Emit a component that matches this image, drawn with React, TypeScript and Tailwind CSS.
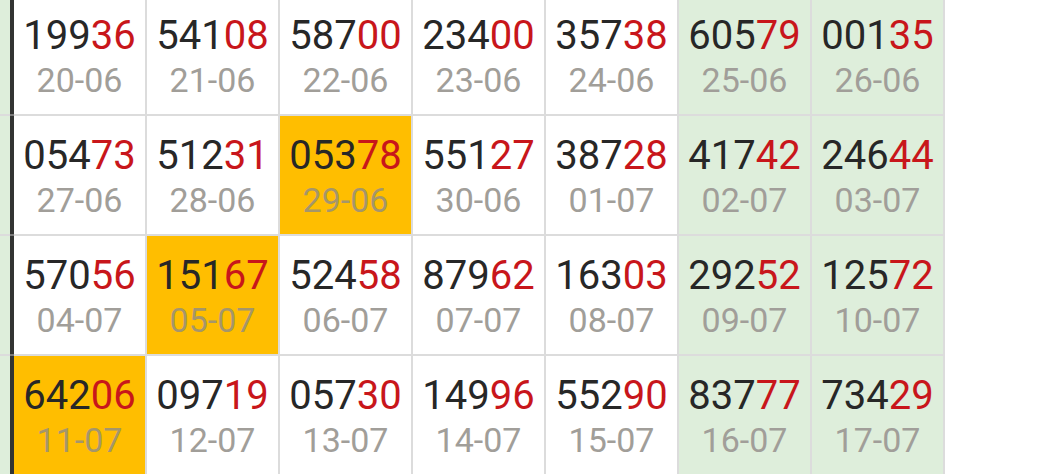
type Cell = { num: string; date: string; hl?: boolean };

// rows of results, last two columns are weekend (green)
const rows: Cell[][] = [
  [
    { num: '19936', date: '20-06' },
    { num: '54108', date: '21-06' },
    { num: '58700', date: '22-06' },
    { num: '23400', date: '23-06' },
    { num: '35738', date: '24-06' },
    { num: '60579', date: '25-06' },
    { num: '00135', date: '26-06' },
  ],
  [
    { num: '05473', date: '27-06' },
    { num: '51231', date: '28-06' },
    { num: '05378', date: '29-06', hl: true },
    { num: '55127', date: '30-06' },
    { num: '38728', date: '01-07' },
    { num: '41742', date: '02-07' },
    { num: '24644', date: '03-07' },
  ],
  [
    { num: '57056', date: '04-07' },
    { num: '15167', date: '05-07', hl: true },
    { num: '52458', date: '06-07' },
    { num: '87962', date: '07-07' },
    { num: '16303', date: '08-07' },
    { num: '29252', date: '09-07' },
    { num: '12572', date: '10-07' },
  ],
  [
    { num: '64206', date: '11-07', hl: true },
    { num: '09719', date: '12-07' },
    { num: '05730', date: '13-07' },
    { num: '14996', date: '14-07' },
    { num: '55290', date: '15-07' },
    { num: '83777', date: '16-07' },
    { num: '73429', date: '17-07' },
  ],
];

function ResultCell({ cell, weekend }: { cell: Cell; weekend: boolean }) {
  const bg = cell.hl ? 'bg-[#ffbe00]' : weekend ? 'bg-[#deeedb]' : 'bg-white';
  return (
    <div
      className={`w-[133px] h-[120px] shrink-0 border-r-2 border-b-2 border-[#dcdcdc] flex flex-col items-center pt-[20px] ${bg}`}
    >
      <div className="text-[40px] leading-[40px] text-[#272727]">
        {cell.num.slice(0, 3)}
        <span className="text-[#c8161b]">{cell.num.slice(3)}</span>
      </div>
      <div
        className={`mt-[7px] text-[34px] leading-[34px] ${cell.hl ? 'text-[#a5966a]' : 'text-[#a19e99]'}`}
      >
        {cell.date}
      </div>
    </div>
  );
}

export default function App() {
  return (
    <div className="w-[1055px] h-[474px] overflow-hidden bg-white font-['Roboto','Liberation_Sans',sans-serif]">
      <div className="-mt-1">
        {rows.map((row, i) => (
          <div key={i} className="flex">
            <div className="w-[10px] h-[120px] shrink-0 bg-[#deeedb] border-b-2 border-[#dcdcdc]" />
            <div className="w-[4px] h-[120px] shrink-0 bg-[#323432] border-b-2 border-[#7a7a7a]" />
            {row.map((cell, j) => (
              <ResultCell key={j} cell={cell} weekend={j >= 5} />
            ))}
          </div>
        ))}
      </div>
    </div>
  );
}
